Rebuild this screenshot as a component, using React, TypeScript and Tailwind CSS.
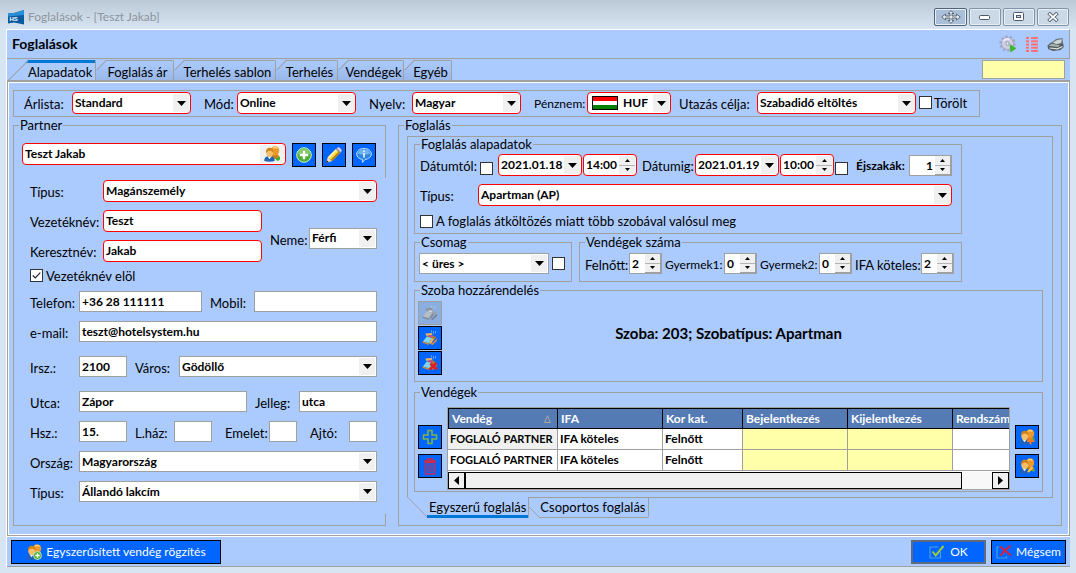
import { useState } from "react";
import type { ReactNode } from "react";
import clsx from "clsx";

type Guest = { name: string; ifa: string; age: string };

const mainTabs = [
  { title: "Foglalás ár", width: "w-[78px]" },
  { title: "Terhelés sablon", width: "w-[102px]" },
  { title: "Terhelés", width: "w-[62px]" },
  { title: "Vendégek", width: "w-[66px]" },
  { title: "Egyéb", width: "w-12" },
];

const guests: Guest[] = [
  { name: "FOGLALÓ PARTNER", ifa: "IFA köteles", age: "Felnőtt" },
  { name: "FOGLALÓ PARTNER", ifa: "IFA köteles", age: "Felnőtt" },
];

const boxBase = "relative flex min-w-0 bg-white text-xs font-bold text-black";
const boxPlain = "h-[21px] border border-[#a0a0a0]";
const boxRequired = "h-[22px] rounded border border-[#ff0000]";

function boxClass(required?: boolean, className?: string) {
  return clsx(boxBase, required ? boxRequired : boxPlain, className);
}

function Group({ title, className, children }: { title: string; className?: string; children: ReactNode }) {
  return (
    <fieldset className={clsx("min-w-0 border border-[#a0a0a0]", className)}>
      <legend className="ml-[5px] px-px leading-[15px]">{title}</legend>
      {children}
    </fieldset>
  );
}

function Label({ htmlFor, className, children }: { htmlFor: string; className?: string; children: ReactNode }) {
  return (
    <label htmlFor={htmlFor} className={clsx("shrink-0 pt-1 leading-4 whitespace-nowrap", className)}>
      {children}
    </label>
  );
}

function DownArrow() {
  return (
    <span className="pointer-events-none absolute inset-y-px right-px flex w-4 items-center justify-center bg-[#f0f0f0]">
      <svg width="9" height="5" viewBox="0 0 9 5" aria-hidden="true">
        <path d="M0 0h9L4.5 5z" fill="#000" />
      </svg>
    </span>
  );
}

type FieldProps = { id: string; value?: string; required?: boolean; className?: string };

function TextField({ id, value = "", required, className }: FieldProps) {
  return (
    <div className={boxClass(required, className)}>
      <input id={id} type="text" defaultValue={value} className="w-full min-w-0 bg-transparent pl-0.5 outline-none" />
    </div>
  );
}

function SelectField({ id, value = "", required, className, children }: FieldProps & { children?: ReactNode }) {
  return (
    <div className={boxClass(required, className)}>
      {children}
      <select
        id={id}
        defaultValue={value}
        className={clsx("w-full min-w-0 appearance-none bg-transparent pr-4 outline-none", children ? "pl-[35px]" : "pl-0.5")}
      >
        <option>{value}</option>
      </select>
      <DownArrow />
    </div>
  );
}

function DateField({ id, value }: { id: string; value: string }) {
  return (
    <div className={boxClass(true, "w-[84px] shrink-0")}>
      <input id={id} type="text" defaultValue={value} className="w-full min-w-0 bg-transparent pl-0.5 outline-none" />
      <DownArrow />
    </div>
  );
}

function SpinField({ id, value, label, required, alignRight, className }: FieldProps & { label?: string; alignRight?: boolean }) {
  return (
    <div className={boxClass(required, className)}>
      <input
        id={id}
        type="text"
        aria-label={label}
        defaultValue={value}
        className={clsx("w-full min-w-0 bg-transparent pl-0.5 outline-none", alignRight && "pr-0.5 text-right")}
      />
      <span className={clsx("flex w-4 shrink-0 flex-col bg-[#f0f0f0]", required ? "m-px" : "border-r border-b border-[#a0a0a0]")}>
        <button type="button" aria-label="+" className="flex flex-1 items-center justify-center border-b border-[#b4b4b4]">
          <svg width="5" height="3" viewBox="0 0 5 3" aria-hidden="true">
            <path d="M0 3h5L2.5 0z" />
          </svg>
        </button>
        <button type="button" aria-label="-" className="flex flex-1 items-center justify-center">
          <svg width="5" height="3" viewBox="0 0 5 3" aria-hidden="true">
            <path d="M0 0h5L2.5 3z" />
          </svg>
        </button>
      </span>
    </div>
  );
}

function CheckBox({ id, checked, label, className }: { id: string; checked?: boolean; label?: string; className?: string }) {
  return (
    <span className={clsx("relative size-[13px] shrink-0", className)}>
      <input
        id={id}
        type="checkbox"
        aria-label={label}
        defaultChecked={checked}
        className="peer block size-[13px] appearance-none border border-[#333333] bg-white"
      />
      <svg className="pointer-events-none absolute inset-0 hidden peer-checked:block" width="13" height="13" viewBox="0 0 13 13" aria-hidden="true">
        <path d="M2.8 6.5 5.3 9 10.3 3.6" fill="none" stroke="#222" strokeWidth="1.2" />
      </svg>
    </span>
  );
}

function IconButton({ label, disabled, children }: { label: string; disabled?: boolean; children: ReactNode }) {
  return (
    <button
      type="button"
      aria-label={label}
      disabled={disabled}
      className={clsx(
        "flex size-6 shrink-0 items-center justify-center border",
        disabled ? "border-[#a0a0a0] bg-[#8aaee0]" : "border-black bg-[#0066ff]"
      )}
    >
      {children}
    </button>
  );
}

function PeopleIcon({ badge = "none" }: { badge?: "none" | "plus" | "add" | "edit" }) {
  return (
    <svg width="16" height="16" viewBox="0 0 16 16" aria-hidden="true">
      <path d="M7 13c0-4 1-5.500 4-5.500s4.500 2 4.500 5.500z" fill="#c9821c" />
      <path d="M7 4.500C7 1.800 8.700.3 11 .3s4.200 1.500 4.200 4.200c0 2.800-1.500 4.800-4.200 4.800S7 7.300 7 4.500z" fill="#eb9a2a" />
      <path d="M9 2.300c1.200-1 3.200-1 4.300.3" stroke="#ffdc92" strokeWidth="1.300" fill="none" />
      <path d="M.3 15c0-3.600 1.900-5 5.200-5s5.200 1.400 5.200 5c-3 1-7.400 1-10.400 0z" fill="#1f63b8" />
      <path d="m3.300 10.200 2.200 3 2.300-3z" fill="#e8f1fb" />
      <path d="M2.200 6.500c0-2.600 1.300-4.300 3.500-4.300s3.500 1.700 3.500 4.300-1.300 4.600-3.500 4.600-3.500-2-3.500-4.600z" fill="#f6c06a" />
      <path d="M2.100 7c-.5-3.300 1.200-5.300 3.600-5.300S9.700 3.600 9.300 6.800c-.9-1.500-2-2.300-3.200-2.400-1.500 0-3 .9-4 2.600z" fill="#cf8218" />
      {badge === "none" && <path d="M11.500 13a2.400 2.400 0 1 0 4-2.500z" fill="#35b52d" />}
      {badge === "plus" && (
        <>
          <circle cx="11.500" cy="11.500" r="4" fill="#4caf3a" stroke="#d6f2cc" strokeWidth=".8" />
          <path d="M11.500 9.200v4.600M9.200 11.500h4.600" stroke="#fff" strokeWidth="1.400" />
        </>
      )}
      {badge === "add" && (
        <>
          <path d="M11.500 8.500v7M8 12h7" stroke="#ff7a1c" strokeWidth="2" />
          <path d="M13.500 9.500h2" stroke="#48c13a" strokeWidth="1.600" />
        </>
      )}
      {badge === "edit" && (
        <>
          <path d="m9 14 4.500-5" stroke="#ffc04a" strokeWidth="2" />
          <path d="M13.500 12.500h2" stroke="#48c13a" strokeWidth="2" />
        </>
      )}
    </svg>
  );
}

function PlusCircleIcon() {
  return (
    <svg width="16" height="16" viewBox="0 0 16 16" aria-hidden="true">
      <circle cx="8" cy="8" r="7.300" fill="#4fae35" stroke="#d4efc9" strokeWidth="1" />
      <path d="M2 7a6 6 0 0 1 12 0c-4 1.500-8 1.500-12 0z" fill="#82ca6c" />
      <path d="M8 3.800v8.400M3.800 8h8.400" stroke="#fff" strokeWidth="2.400" />
    </svg>
  );
}

function PencilIcon() {
  return (
    <svg width="16" height="16" viewBox="0 0 16 16" aria-hidden="true">
      <path d="m1.800 10.200 8.400-8.400 4 4-8.400 8.400z" fill="#ffd83d" />
      <path d="m1.800 10.200 8.400-8.400 1.300 1.300-8.400 8.400z" fill="#fff3a8" />
      <path d="m4.500 12.900 8.400-8.400 1.300 1.300-8.400 8.400z" fill="#b57a08" />
      <path d="m10.800 1.200 1-.8c1.200-.8 4.600 2.400 3.700 3.800l-.8 1z" fill="#f0d0d6" />
      <path d="m9.800 2.200 4 4 1-1-4-4z" fill="#9096a0" />
      <path d="m1.800 10.200-1.600 5.600 5.600-1.600z" fill="#f6e4b8" />
      <path d="m.9 13.300-.8 2.600 2.600-.8z" fill="#222" />
    </svg>
  );
}

function InfoIcon() {
  return (
    <svg width="16" height="16" viewBox="0 0 16 16" aria-hidden="true">
      <path d="M8 1.500c4.200 0 7.300 2.300 7.300 5.500 0 3-2.600 5-6.300 5.400L6.500 15.500 6.300 12.400C3 11.900.7 9.800.7 7c0-3.200 3.100-5.500 7.300-5.500z" fill="#2f86e0" stroke="#bfe0ff" strokeWidth="1" />
      <path d="M2 6.500C2.300 4 5 2.600 8 2.600s5.700 1.400 6 3.900c-3 1.600-9 1.600-12 0z" fill="#6fb4f5" />
      <path d="M8 6v4.500M8 3.500v1.400" stroke="#fff" strokeWidth="1.500" />
    </svg>
  );
}

function BedIcon({ kind }: { kind: "gray" | "assign" | "remove" }) {
  const gray = kind === "gray";
  return (
    <svg width="16" height="16" viewBox="0 0 16 16" aria-hidden="true">
      <path d="M9.500.5v2M11.500 1v3M13.500 1v2.500" stroke={gray ? "#a9bdd6" : "#6fa6f0"} strokeWidth=".9" />
      <path d="M3.500 3.500 9.500 3l1 1.200-2 1.300-4.500.3z" fill={gray ? "#8b939d" : "#f0b45a"} />
      <path d="m5 6.500 5-1.500 4.500 2.500-4 3.500z" fill={gray ? "#9aa2ab" : "#b0762e"} />
      <path d="m.8 11.500 4-5 5.500 1.800-3.500 5z" fill={gray ? "#b6bdc5" : "#7fd4ee"} />
      <path d="m6 6.300 2-1.300 2.500 1.200-1.500 1.500z" fill={gray ? "#cfd4da" : "#d8429a"} />
      <path d="m6.800 13.300 3.500-5 1.700.6-3 5z" fill={gray ? "#858d96" : "#ffb347"} />
      <path d="M.5 11.600l6.500 1.900V15L.5 12.800z" fill={gray ? "#7d858f" : "#d98a2b"} />
      <path d="m9 14.500 6-6v2.200L10.500 15z" fill={gray ? "#767e88" : "#f08a24"} />
      {kind === "remove" && <path d="m8.500 8.500 6.500 6M14.500 8 8 14.500" stroke="#d8202c" strokeWidth="3" />}
    </svg>
  );
}

function GearIcon() {
  return (
    <svg width="18" height="18" viewBox="0 0 18 18" aria-hidden="true">
      <circle cx="8.500" cy="8.500" r="6.700" fill="none" stroke="#a8a6c8" strokeWidth="3" strokeDasharray="2.300 1.900" />
      <circle cx="8.500" cy="8.500" r="6" fill="#cfcfe2" stroke="#9c9dbd" strokeWidth=".8" />
      <path d="M4 6c1.500-2 4-2.800 6.500-2" stroke="#f2f2fa" strokeWidth="1.500" fill="none" />
      <circle cx="8.500" cy="8.500" r="1.700" fill="#e8e9f4" stroke="#9293b5" strokeWidth="1" />
      <path d="m10.500 9 7 4.300-6 4.200z" fill="#3eb52a" />
    </svg>
  );
}

function ListIcon() {
  return (
    <svg width="12" height="15" viewBox="0 0 12 15" aria-hidden="true">
      <path d="M0 1h3M5 1h7M0 4.300h3M5 4.300h7M0 7.500h3M5 7.500h7M0 10.800h3M5 10.800h7M0 14h3M5 14h7" stroke="#ff7078" strokeWidth="1.900" />
    </svg>
  );
}

function PrinterIcon() {
  return (
    <svg width="17" height="15" viewBox="0 0 17 15" aria-hidden="true">
      <path d="M4 6 9 2l6.500-1 .7 6.500L10 9z" fill="#6e767a" />
      <path d="m6 5.500 4-2.500 5-.8-1 3.800-4 1.500z" fill="#cdd4d5" />
      <path d="M.5 8.500 4 5.500l3.500 1.800 8.700-.8.6 3.500-3.300 3-7.500 1-5-2z" fill="#545c60" />
      <path d="m1.500 8.800 3-2 8.500 1.500-2 1.600z" fill="#a9b2b4" />
      <path d="m2.500 11 8 .8 5-2.300" stroke="#dfe4e4" strokeWidth="1.200" fill="none" />
    </svg>
  );
}

function LogoIcon() {
  return (
    <svg width="16" height="15" viewBox="0 0 16 15" aria-hidden="true">
      <path d="M0 3.500 6 3 16 0v14.500L6 12.500 0 13.500z" fill="#0a5aa0" />
      <path d="M0 3.500 6 3 16 0v5L0 6.500z" fill="#2a8fd6" />
      <text x="1.500" y="10.500" fontSize="6" fontWeight="bold" fontFamily="Liberation Sans, sans-serif" fill="#fff">
        HS
      </text>
    </svg>
  );
}

function MoveIcon() {
  return (
    <svg width="20" height="14" viewBox="0 0 20 14" aria-hidden="true">
      <path
        d="M10 .7 13 3.500h-2V6h4.500V4L19.300 7l-3.800 3V8H11v2.500h2L10 13.300 7 10.500h2V8H4.500v2L.7 7l3.800-3v2H9V3.500H7z"
        fill="#e4eaf0"
        stroke="#5a6270"
        strokeWidth=".9"
      />
    </svg>
  );
}

function WindowButton({ label, active, children }: { label: string; active?: boolean; children: ReactNode }) {
  return (
    <button
      type="button"
      aria-label={label}
      className={clsx(
        "flex h-[18px] items-center justify-center rounded-xs border shadow-[inset_0_0_0_1px_#e6eef6]",
        active ? "w-[33px] border-[#4f647c] bg-[#a9c0d8]" : "w-8 border-[#8393a6] bg-[#cbd9e6]"
      )}
    >
      {children}
    </button>
  );
}

function TitleBar() {
  return (
    <header className="flex h-[29px] items-start justify-between bg-linear-to-b from-[#bccad8] to-[#d7e4f1] pr-[7px] pl-2">
      <div className="flex items-center gap-1 pt-[9px]">
        <LogoIcon />
        <h1 className="text-xs leading-4 text-[#8d949c]">Foglalások - [Teszt Jakab]</h1>
      </div>
      <div className="flex gap-0.5 pt-2">
        <WindowButton label="Mozgatás" active>
          <MoveIcon />
        </WindowButton>
        <WindowButton label="Kis méret">
          <svg width="12" height="6" viewBox="0 0 12 6" aria-hidden="true">
            <rect x=".5" y="1.500" width="10" height="4" rx="1" fill="#fff" stroke="#4d5a6c" />
          </svg>
        </WindowButton>
        <WindowButton label="Teljes méret">
          <svg width="12" height="10" viewBox="0 0 12 10" aria-hidden="true">
            <rect x=".5" y=".5" width="10" height="8" rx="1" fill="#fff" stroke="#4d5a6c" />
            <rect x="3.500" y="3.500" width="4" height="2" fill="#cbd9e6" stroke="#4d5a6c" />
          </svg>
        </WindowButton>
        <WindowButton label="Bezárás">
          <svg width="12" height="10" viewBox="0 0 12 10" aria-hidden="true">
            <path d="m1.500 1 9 8M10.500 1l-9 8" stroke="#4d5a6c" strokeWidth="3.600" />
            <path d="m2 1.500 8 7M10 1.500l-8 7" stroke="#fff" strokeWidth="1.700" />
          </svg>
        </WindowButton>
      </div>
    </header>
  );
}

function MainTabs() {
  return (
    <div className="flex h-[21px] items-end justify-between pr-[5px] pl-px">
      <div role="tablist" className="flex h-5">
        <button
          type="button"
          role="tab"
          aria-selected="true"
          className="relative w-[88px] border-r border-[#a0a0a0] pt-1 pl-5 text-left leading-4 [clip-path:polygon(20px_0,100%_0,100%_100%,0_100%)]"
        >
          <span className="absolute inset-x-0 top-0 h-[3px] bg-[#0078d7]" />
          <svg className="absolute top-0 left-0" width="20" height="20" viewBox="0 0 20 20" aria-hidden="true">
            <path d="M0 20 20 0" stroke="#a0a0a0" strokeWidth="2" />
          </svg>
          Alapadatok
        </button>
        {mainTabs.map((tab) => (
          <button
            key={tab.title}
            type="button"
            role="tab"
            aria-selected="false"
            className={clsx(
              "relative rounded-tr-xs border-t border-r border-[#a0a0a0] bg-linear-to-b from-[#abcbff] to-[#99b7e8] pt-[3px] pl-1.5 text-center leading-4 whitespace-nowrap [clip-path:polygon(10px_0,100%_0,100%_100%,0_100%,0_10px)]",
              tab.width
            )}
          >
            <svg className="absolute -top-px left-0" width="10" height="10" viewBox="0 0 10 10" aria-hidden="true">
              <path d="M0 10 10 0" stroke="#a0a0a0" strokeWidth="2" />
            </svg>
            {tab.title}
          </button>
        ))}
      </div>
      <input type="text" readOnly aria-label="Állapot" className="mb-px h-[19px] w-[83px] border border-[#a0a0a0] bg-[#ffffaa]" />
    </div>
  );
}

function FilterBar() {
  return (
    <div className="flex h-[27px] w-fit items-start border border-[#a0a0a0] py-px pr-3 pl-2.5">
      <Label htmlFor="pricelist" className="w-12">Árlista:</Label>
      <SelectField id="pricelist" value="Standard" required className="w-[119px]" />
      <Label htmlFor="mode" className="ml-[13px] w-[33px]">Mód:</Label>
      <SelectField id="mode" value="Online" required className="w-[119px]" />
      <Label htmlFor="language" className="ml-[13px] w-[43px]">Nyelv:</Label>
      <SelectField id="language" value="Magyar" required className="w-[109px]" />
      <Label htmlFor="currency" className="ml-[13px] w-[53px] text-xs">Pénznem:</Label>
      <SelectField id="currency" value="HUF" required className="w-[84px]">
        <span className="pointer-events-none absolute top-[3px] left-1 flex h-3.5 w-[26px] flex-col border border-black bg-white">
          <span className="h-1 bg-[#ff0000]" />
          <span className="h-1 bg-white" />
          <span className="h-1 bg-[#008000]" />
        </span>
      </SelectField>
      <Label htmlFor="purpose" className="ml-2 w-[78px]">Utazás célja:</Label>
      <SelectField id="purpose" value="Szabadidő eltöltés" required className="w-[159px]" />
      <CheckBox id="deleted" className="mt-1 ml-[3px]" />
      <label htmlFor="deleted" className="pt-[3px] pl-0.5 leading-4">Törölt</label>
    </div>
  );
}

function PartnerPanel() {
  return (
    <Group title="Partner" className="flex flex-col">
      <div className="flex gap-1.5 pt-2.5 pr-[9px] pl-2">
        <div className={boxClass(true, "flex-1")}>
          <input type="text" aria-label="Partner" defaultValue="Teszt Jakab" className="w-full min-w-0 bg-transparent pl-0.5 outline-none" />
          <button type="button" aria-label="Partner keresése" className="m-px flex w-6 shrink-0 items-center justify-center bg-[#f0f0f0]">
            <PeopleIcon />
          </button>
        </div>
        <IconButton label="Új partner">
          <PlusCircleIcon />
        </IconButton>
        <IconButton label="Szerkesztés">
          <PencilIcon />
        </IconButton>
        <IconButton label="Információ">
          <InfoIcon />
        </IconButton>
      </div>

      <div className="mt-[11px] -mr-px mb-[11px] bg-[#abcbff] pt-0.5 pr-[9px] pb-3 pl-4">
        <div className="flex">
          <Label htmlFor="partner-type" className="w-[73px]">Típus:</Label>
          <SelectField id="partner-type" value="Magánszemély" required className="flex-1" />
        </div>
        <div className="mt-2 flex items-center">
          <div className="flex flex-1 flex-col gap-2">
            <div className="flex">
              <Label htmlFor="last-name" className="w-[73px]">Vezetéknév:</Label>
              <TextField id="last-name" value="Teszt" required className="flex-1" />
            </div>
            <div className="flex">
              <Label htmlFor="first-name" className="w-[73px]">Keresztnév:</Label>
              <TextField id="first-name" value="Jakab" required className="flex-1" />
            </div>
          </div>
          <div className="ml-2 flex pt-1">
            <Label htmlFor="gender" className="w-[39px]">Neme:</Label>
            <SelectField id="gender" value="Férfi" className="w-[68px]" />
          </div>
        </div>
        <div className="mt-[7px] flex h-[13px] items-center gap-[3px]">
          <CheckBox id="last-first" checked />
          <label htmlFor="last-first" className="leading-4">Vezetéknév elöl</label>
        </div>
        <div className="mt-[9px] flex">
          <Label htmlFor="phone" className="w-[49px]">Telefon:</Label>
          <TextField id="phone" value="+36 28 111111" className="flex-1" />
          <Label htmlFor="mobile" className="ml-2 w-11">Mobil:</Label>
          <TextField id="mobile" className="flex-1" />
        </div>
        <div className="mt-[9px] flex">
          <Label htmlFor="email" className="w-[49px]">e-mail:</Label>
          <TextField id="email" value="teszt@hotelsystem.hu" className="flex-1" />
        </div>
        <div className="mt-3.5 flex">
          <Label htmlFor="zip" className="w-[49px]">Irsz.:</Label>
          <TextField id="zip" value="2100" className="w-12" />
          <Label htmlFor="city" className="ml-2 w-11">Város:</Label>
          <SelectField id="city" value="Gödöllő" className="flex-1" />
        </div>
        <div className="mt-3.5 flex">
          <Label htmlFor="street" className="w-[49px]">Utca:</Label>
          <TextField id="street" value="Zápor" className="flex-1" />
          <Label htmlFor="street-kind" className="ml-2 w-11">Jelleg:</Label>
          <TextField id="street-kind" value="utca" className="w-[78px]" />
        </div>
        <div className="mt-[9px] flex">
          <Label htmlFor="house" className="w-[49px]">Hsz.:</Label>
          <TextField id="house" value="15." className="w-12" />
          <Label htmlFor="stairs" className="ml-2 w-[39px]">L.ház:</Label>
          <TextField id="stairs" className="flex-1" />
          <Label htmlFor="floor" className="ml-[13px] w-11">Emelet:</Label>
          <TextField id="floor" className="w-7" />
          <Label htmlFor="door" className="ml-[13px] w-[39px]">Ajtó:</Label>
          <TextField id="door" className="w-7" />
        </div>
        <div className="mt-[9px] flex">
          <Label htmlFor="country" className="w-[49px]">Ország:</Label>
          <SelectField id="country" value="Magyarország" className="flex-1" />
        </div>
        <div className="mt-[9px] flex">
          <Label htmlFor="address-type" className="w-[49px]">Típus:</Label>
          <SelectField id="address-type" value="Állandó lakcím" className="flex-1" />
        </div>
      </div>
    </Group>
  );
}

function BookingBasics() {
  return (
    <Group title="Foglalás alapadatok" className="w-[548px]">
      <div className="flex pt-0.5 pl-[5px]">
        <Label htmlFor="date-from" className="w-[60px]">Dátumtól:</Label>
        <CheckBox id="from-fixed" label="Dátumtól" className="mt-2 mr-[5px]" />
        <DateField id="date-from" value="2021.01.18" />
        <SpinField id="time-from" value="14:00" label="Dátumtól" required className="ml-px w-[54px]" />
        <Label htmlFor="date-to" className="ml-[5px] w-[53px]">Dátumig:</Label>
        <DateField id="date-to" value="2021.01.19" />
        <SpinField id="time-to" value="10:00" label="Dátumig" required className="ml-px w-[54px]" />
        <CheckBox id="to-fixed" label="Dátumig" className="mt-2 ml-px" />
        <Label htmlFor="nights" className="ml-2 w-[53px] text-xs font-bold">Éjszakák:</Label>
        <SpinField id="nights" value="1" alignRight className="mt-px w-[43px]" />
      </div>
      <div className="mt-2 flex pr-[9px] pl-[5px]">
        <Label htmlFor="room-type" className="w-[58px]">Típus:</Label>
        <SelectField id="room-type" value="Apartman (AP)" required className="flex-1" />
      </div>
      <div className="mt-2 mb-[5px] flex h-3.5 items-center gap-[3px] pl-[5px]">
        <CheckBox id="moving" />
        <label htmlFor="moving" className="leading-4">A foglalás átköltözés miatt több szobával valósul meg</label>
      </div>
    </Group>
  );
}

function GuestTable() {
  const yellow = "border-r border-b border-[#a0a0a0] bg-[#ffffaa]";
  const cell = "overflow-hidden border-r border-b border-[#a0a0a0] pl-0.5";
  const head = "overflow-hidden border-y border-r border-black pl-[3px] text-left";

  return (
    <div className="min-w-0 flex-1 overflow-hidden border border-[#a0a0a0] bg-white text-xs font-bold">
      <table className="w-full table-fixed border-separate border-spacing-0 whitespace-nowrap">
        <colgroup>
          <col className="w-[110px]" />
          <col className="w-[105px]" />
          <col className="w-20" />
          <col className="w-[105px]" />
          <col className="w-[105px]" />
          <col />
        </colgroup>
        <thead className="bg-[#557bb5] text-white">
          <tr className="h-[21px]">
            <th className={clsx(head, "border-l pl-0.5")}>
              <span className="flex items-center justify-between pr-1.5">
                Vendég
                <svg width="7" height="8" viewBox="0 0 7 8" aria-hidden="true">
                  <path d="M.5 7.500 3.500.8l3 6.700z" fill="none" stroke="#a8a8a0" />
                </svg>
              </span>
            </th>
            <th className={head}>IFA</th>
            <th className={head}>Kor kat.</th>
            <th className={head}>Bejelentkezés</th>
            <th className={head}>Kijelentkezés</th>
            <th className="overflow-hidden border-y border-black pl-[3px] text-left">Rendszám</th>
          </tr>
        </thead>
        <tbody>
          {guests.map((guest, index) => (
            <tr key={index} className="h-[21px]">
              <td className={clsx(cell, "text-[11px]", index === 0 && "bg-[#f0f0f0]")}>{guest.name}</td>
              <td className={cell}>{guest.ifa}</td>
              <td className={cell}>{guest.age}</td>
              <td className={yellow} />
              <td className={yellow} />
              <td className="border-b border-[#a0a0a0]" />
            </tr>
          ))}
        </tbody>
      </table>
      <div className="mt-px flex h-[17px] bg-[#f8f8f8]">
        <button type="button" aria-label="Balra" className="flex w-[17px] items-center justify-center border border-black bg-[#f0f0f0]">
          <svg width="5" height="9" viewBox="0 0 5 9" aria-hidden="true">
            <path d="M5 0v9L0 4.500z" />
          </svg>
        </button>
        <div className="flex-[497] border border-black bg-[#f0f0f0]" />
        <div className="flex-[30]" />
        <button type="button" aria-label="Jobbra" className="flex w-[17px] items-center justify-center border border-black bg-[#f0f0f0]">
          <svg width="5" height="9" viewBox="0 0 5 9" aria-hidden="true">
            <path d="M0 0v9l5-4.500z" />
          </svg>
        </button>
      </div>
    </div>
  );
}

function BookingPanel() {
  const [grouped, setGrouped] = useState(false);

  return (
    <Group title="Foglalás" className="pb-[7px]">
      <div className="mx-2 mt-[3px] border-x border-t border-[#a0a0a0] pr-[9px] pb-[5px] pl-1.5">
        <BookingBasics />

        <div className="mt-px flex w-[548px] gap-[7px]">
          <Group title="Csomag" className="w-[158px]">
            <div className="flex items-center gap-[3px] pt-[3px] pb-[7px] pl-1">
              <SelectField id="package" value="< üres >" className="w-[130px]" />
              <CheckBox id="package-on" label="Csomag" />
            </div>
          </Group>
          <Group title="Vendégek száma" className="flex-1">
            <div className="flex pt-[3px] pb-[7px] pl-[5px]">
              <Label htmlFor="adults" className="w-11">Felnőtt:</Label>
              <SpinField id="adults" value="2" className="w-[33px]" />
              <Label htmlFor="children1" className="ml-[3px] w-[59px] text-xs">Gyermek1:</Label>
              <SpinField id="children1" value="0" className="w-[33px]" />
              <Label htmlFor="children2" className="ml-[3px] w-[59px] text-xs">Gyermek2:</Label>
              <SpinField id="children2" value="0" className="w-[33px]" />
              <Label htmlFor="taxed" className="ml-[3px] w-[66px]">IFA köteles:</Label>
              <SpinField id="taxed" value="2" className="w-[33px]" />
            </div>
          </Group>
        </div>

        <Group title="Szoba hozzárendelés" className="mt-px">
          <div className="flex items-center px-[3px] pt-[3px] pb-1.5">
            <div className="flex flex-col gap-px">
              <IconButton label="Szoba" disabled>
                <BedIcon kind="gray" />
              </IconButton>
              <IconButton label="Szoba hozzárendelés">
                <BedIcon kind="assign" />
              </IconButton>
              <IconButton label="Szoba törlése">
                <BedIcon kind="remove" />
              </IconButton>
            </div>
            <p className="flex-1 pr-6 pb-2.5 text-center text-[15px] font-bold">Szoba: 203; Szobatípus: Apartman</p>
          </div>
        </Group>

        <Group title="Vendégek" className="mt-[3px]">
          <div className="flex gap-[5px] px-[3px] pt-[7px] pb-px">
            <div className="flex flex-col gap-[5px] pt-[18px]">
              <IconButton label="Új vendég">
                <svg width="16" height="16" viewBox="0 0 16 16" aria-hidden="true">
                  <path d="M6 1.500h4V6h4.500v4H10v4.500H6V10H1.500V6H6z" fill="none" stroke="#7fb542" strokeWidth="1.500" />
                </svg>
              </IconButton>
              <IconButton label="Vendég törlése">
                <svg width="14" height="17" viewBox="0 0 14 17" fill="none" stroke="#cf2a48" aria-hidden="true">
                  <path d="M4.500 2.500V1h5v1.500M1 3h12M2.500 4.500h9V16h-9z" strokeWidth="1.400" />
                  <path d="M5 6.500V14M7 6.500V14M9 6.500V14" strokeWidth=".9" />
                </svg>
              </IconButton>
            </div>
            <GuestTable />
            <div className="flex flex-col gap-[5px] pt-[18px]">
              <IconButton label="Vendég hozzáadása">
                <PeopleIcon badge="add" />
              </IconButton>
              <IconButton label="Vendég szerkesztése">
                <PeopleIcon badge="edit" />
              </IconButton>
            </div>
          </div>
        </Group>
      </div>

      <div role="tablist" className="mx-2 flex h-[21px]">
        <button
          type="button"
          role="tab"
          aria-selected={!grouped}
          onClick={() => setGrouped(false)}
          className="relative border-r border-[#a0a0a0] pr-0.5 pb-0.5 pl-[22px] leading-4"
        >
          <svg className="absolute top-0 left-0" width="21" height="21" viewBox="0 0 21 21" aria-hidden="true">
            <path d="M.5 0 20.500 20.500" stroke="#a0a0a0" />
          </svg>
          <span className="absolute right-0 bottom-0 left-5 h-[3px] bg-[#0078d7]" />
          Egyszerű foglalás
        </button>
        <button
          type="button"
          role="tab"
          aria-selected={grouped}
          onClick={() => setGrouped(true)}
          className="relative rounded-br-xs border-t border-r border-[#a0a0a0] pr-0.5 pb-0.5 pl-[11px] leading-4"
        >
          <svg className="absolute top-0 left-0" width="11" height="20" viewBox="0 0 11 20" aria-hidden="true">
            <path d="M0 9 10.500 19.500" stroke="#a0a0a0" />
          </svg>
          <span className="absolute right-0 bottom-0 left-2.5 h-px bg-[#a0a0a0]" />
          Csoportos foglalás
        </button>
        <div className="flex-1 border-t border-[#a0a0a0]" />
      </div>
    </Group>
  );
}

function Footer() {
  return (
    <footer className="flex justify-between border-t border-b border-t-white border-b-[#a0a0a0] pt-[3px] pr-1 pb-0.5 pl-1 text-xs text-white">
      <button type="button" className="flex h-6 w-[210px] items-center justify-center gap-1 border border-black bg-[#0066ff]">
        <PeopleIcon badge="plus" />
        Egyszerűsített vendég rögzítés
      </button>
      <div className="flex gap-[5px]">
        <button type="button" className="flex h-6 w-[75px] items-center justify-center gap-1.5 border-2 border-[#5f6b7c] bg-[#0066ff]">
          <svg width="15" height="14" viewBox="0 0 15 14" fill="none" aria-hidden="true">
            <path d="M9.500 2H1v11h10.500V6.500" stroke="#4f9be0" strokeWidth="1.200" />
            <path d="m3.500 6.500 3.200 4L14.500 1" stroke="#9ccb3b" strokeWidth="2" />
          </svg>
          OK
        </button>
        <button type="button" className="flex h-6 w-[75px] items-center justify-center gap-1 border border-black bg-[#0066ff]">
          <svg width="16" height="14" viewBox="0 0 16 14" fill="none" aria-hidden="true">
            <path d="M3 2H1v11h9.500V11" stroke="#4f9be0" strokeWidth="1.200" />
            <path d="M4 1.500C7 4 11 7 15 10.500M14.500.8C10 4 7 7 4.500 10.800" stroke="#d8203f" strokeWidth="1.900" />
          </svg>
          Mégsem
        </button>
      </div>
    </footer>
  );
}

export default function App() {
  return (
    <div className="min-h-screen bg-[#d7e4f1] font-[Lato,'Noto_Sans',sans-serif] text-[13px] text-black">
      <TitleBar />
      <main className="mx-1.5 border-l border-white bg-[#abcbff]">
        <div className="flex h-[30px] items-center justify-between border-t border-r border-b border-t-white border-r-[#a0a0a0] border-b-[#a0a0a0] px-[5px]">
          <h2 className="text-sm font-bold">Foglalások</h2>
          <div className="flex items-center gap-[9px]">
            <button type="button" aria-label="Beállítások">
              <GearIcon />
            </button>
            <button type="button" aria-label="Lista">
              <ListIcon />
            </button>
            <button type="button" aria-label="Nyomtatás">
              <PrinterIcon />
            </button>
          </div>
        </div>

        <MainTabs />

        <div className="border-x border-t-2 border-b border-[#a0a0a0]">
          <div className="border border-white pt-[7px] pr-1.5 pb-2 pl-1">
            <FilterBar />
            <div className="mt-px grid grid-cols-[373fr_664fr] gap-3">
              <PartnerPanel />
              <BookingPanel />
            </div>
          </div>
        </div>

        <Footer />
      </main>
    </div>
  );
}
